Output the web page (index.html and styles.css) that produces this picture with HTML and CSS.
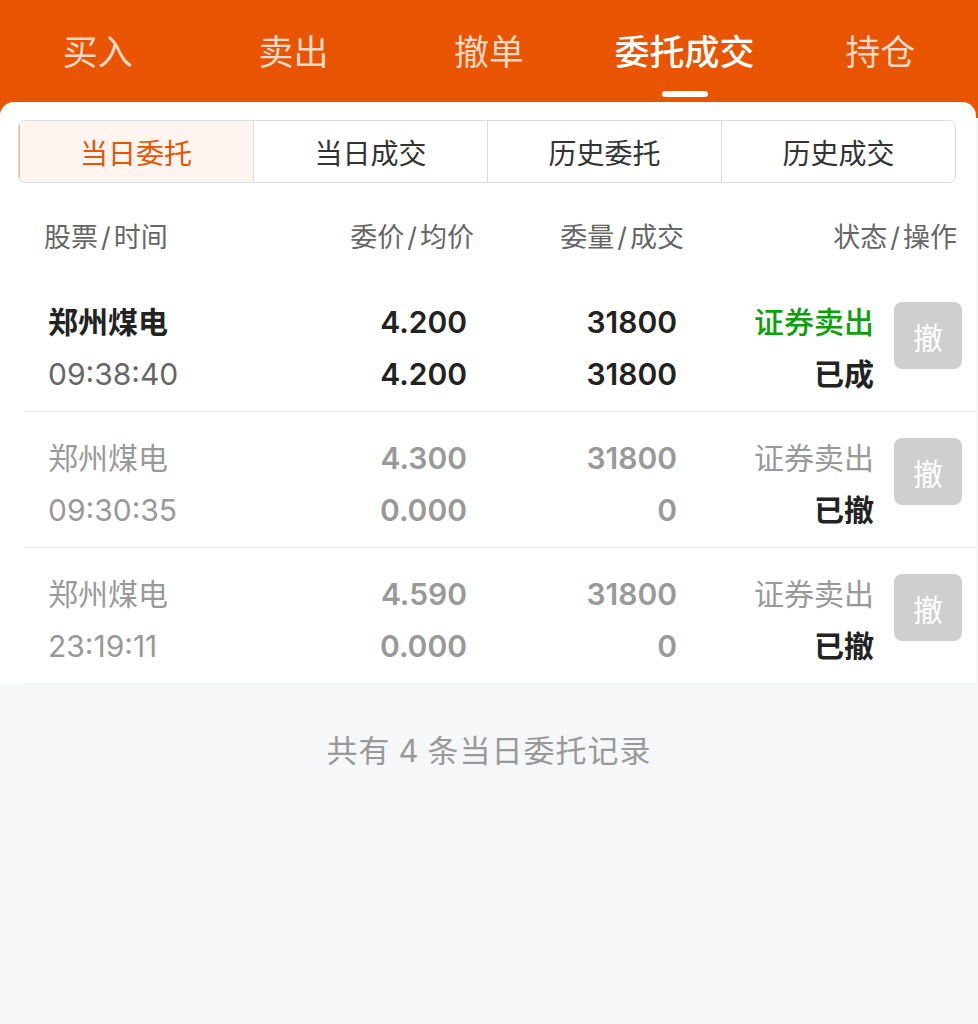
FILE: index.html
```html
<!DOCTYPE html>
<html lang="zh-CN">
<head>
<meta charset="utf-8">
<title>委托成交</title>
<link rel="stylesheet" href="styles.css">
</head>
<body>
<header class="topbar">
  <nav class="tabs">
    <div class="tab">买入</div>
    <div class="tab">卖出</div>
    <div class="tab">撤单</div>
    <div class="tab active">委托成交<span class="indicator"></span></div>
    <div class="tab">持仓</div>
  </nav>
</header>
<main class="card">
  <div class="segments">
    <div class="seg active">当日委托</div>
    <div class="seg">当日成交</div>
    <div class="seg">历史委托</div>
    <div class="seg">历史成交</div>
  </div>
  <div class="thead">
    <div>股票<span class="sl">/</span>时间</div>
    <div class="r">委价<span class="sl">/</span>均价</div>
    <div class="r">委量<span class="sl">/</span>成交</div>
    <div class="r">状态<span class="sl">/</span>操作</div>
  </div>
  <div class="row">
    <div class="cell"><span class="name">郑州煤电</span><span class="time">09:38:40</span></div>
    <div class="cell r num"><span>4.200</span><span>4.200</span></div>
    <div class="cell r num"><span>31800</span><span>31800</span></div>
    <div class="cell r"><span class="sell">证券卖出</span><span class="state">已成</span></div>
    <div class="btn">撤</div>
  </div>
  <div class="row muted">
    <div class="cell"><span class="name">郑州煤电</span><span class="time">09:30:35</span></div>
    <div class="cell r num"><span>4.300</span><span>0.000</span></div>
    <div class="cell r num"><span>31800</span><span>0</span></div>
    <div class="cell r"><span class="sell">证券卖出</span><span class="state">已撤</span></div>
    <div class="btn">撤</div>
  </div>
  <div class="row muted">
    <div class="cell"><span class="name">郑州煤电</span><span class="time">23:19:11</span></div>
    <div class="cell r num"><span>4.590</span><span>0.000</span></div>
    <div class="cell r num"><span>31800</span><span>0</span></div>
    <div class="cell r"><span class="sell">证券卖出</span><span class="state">已撤</span></div>
    <div class="btn">撤</div>
  </div>
</main>
<footer class="summary">共有<span class="n">4</span>条当日委托记录</footer>
</body>
</html>
```

FILE: styles.css
```css
* { box-sizing: border-box; }
html, body { margin: 0; padding: 0; }
body {
  background: #f6f7f9;
  font-family: Inter, "Noto Sans CJK SC", sans-serif;
  width: 978px;
}
.topbar {
  background: #e85400;
  height: 118px;
}
.tabs {
  display: grid;
  grid-template-columns: repeat(5, 1fr);
  padding-top: 31px;
}
.tab {
  position: relative;
  text-align: center;
  font-size: 35px;
  line-height: 42px;
  color: rgba(255, 255, 255, 0.78);
}
.tab.active {
  color: #fff;
  font-weight: 500;
}
.indicator {
  position: absolute;
  left: 50%;
  top: 60px;
  width: 46px;
  height: 6px;
  margin-left: -23px;
  border-radius: 3px;
  background: #fff;
}
.card {
  position: relative;
  margin-top: -16px;
  margin-right: 2px;
  background: #fff;
  border-radius: 14px 14px 0 0;
  padding-top: 18px;
}
.segments {
  display: grid;
  grid-template-columns: repeat(4, 1fr);
  margin: 0 20px 0 18px;
  height: 63px;
  border: 1px solid #d9dce2;
  border-radius: 7px;
  overflow: hidden;
}
.seg {
  display: flex;
  align-items: center;
  justify-content: center;
  font-size: 28px;
  color: #333;
  border-left: 1px solid #d9dce2;
}
.seg:first-child { border-left: none; }
.seg.active {
  background: #fef5f1;
  color: #e85400;
  box-shadow: inset 1px 0 0 #eab89e;
}
.thead {
  display: grid;
  grid-template-columns: 256px 174px 210px 273px;
  padding: 36px 0 20px 44px;
  font-size: 27px;
  line-height: 37px;
  color: #666;
}
.sl { padding: 0 3px; }
.r { text-align: right; }
.row {
  display: grid;
  grid-template-columns: 252px 167px 210px 197px 88px;
  margin-left: 24px;
  padding: 20px 0 11px 24px;
  border-bottom: 1px solid #eeeeee;
  height: 136px;
}
.cell {
  display: flex;
  flex-direction: column;
  font-size: 30px;
  line-height: 52px;
}
.cell.r { align-items: flex-end; }
.name { color: #222; font-weight: 600; }
.time { color: #666; }
.num { font-weight: 600; color: #222; }
.sell { color: #0ca10c; font-weight: 500; }
.state { color: #222; font-weight: 600; }
.btn {
  margin-left: 20px;
  margin-top: 6px;
  width: 68px;
  height: 67px;
  border-radius: 8px;
  background: #cfcfcf;
  color: #fff;
  font-size: 30px;
  display: flex;
  align-items: center;
  justify-content: center;
}
.muted .name { color: #999; font-weight: 400; }
.muted .time { color: #999; }
.muted .num { color: #999; }
.muted .sell { color: #999; font-weight: 400; }
.summary {
  padding-top: 46px;
  text-align: center;
  font-size: 31px;
  line-height: 42px;
  color: #999;
  letter-spacing: 1px;
}
.n { padding: 0 8px; }
```
